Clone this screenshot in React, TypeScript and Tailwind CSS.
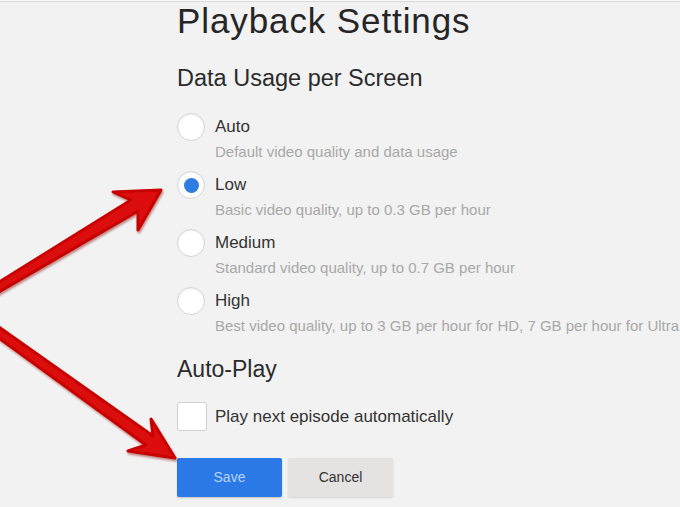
import React from "react";

type Option = { label: string; desc: string; checked?: boolean };

const options: Option[] = [
  { label: "Auto", desc: "Default video quality and data usage" },
  { label: "Low", desc: "Basic video quality, up to 0.3 GB per hour", checked: true },
  { label: "Medium", desc: "Standard video quality, up to 0.7 GB per hour" },
  { label: "High", desc: "Best video quality, up to 3 GB per hour for HD, 7 GB per hour for Ultra HD" },
];

function Radio({ checked }: { checked?: boolean }) {
  return (
    <span className="flex h-[28px] w-[28px] shrink-0 items-center justify-center rounded-full border border-[#d4d4d4] bg-white shadow-[inset_0_1px_2px_rgba(0,0,0,0.06)]">
      {checked && <span className="h-[15px] w-[15px] rounded-full bg-[#2f7de3]" />}
    </span>
  );
}

function Arrows() {
  return (
    <svg className="pointer-events-none absolute left-0 top-0" width="680" height="507" viewBox="0 0 680 507">
      <defs>
        <filter id="arrowShade" x="-20%" y="-20%" width="140%" height="140%">
          <feDropShadow dx="1" dy="2" stdDeviation="1.2" floodColor="#7a0000" floodOpacity="0.45" />
        </filter>
      </defs>
      <g fill="#dc0a0a" stroke="#c80606" strokeWidth="3" strokeLinejoin="round" filter="url(#arrowShade)">
        {/* arrow pointing at the Low option */}
        <polygon points="161,190 113,192 131,200 -12,289 -8,296 138,211 138,230" />
        {/* arrow pointing at the Save button */}
        <polygon points="175,458 151,419 153,436 -7,323 -12,330 146,445 128,451" />
      </g>
    </svg>
  );
}

export default function App() {
  return (
    <div className="relative h-[507px] w-[680px] overflow-hidden bg-[#f2f2f2] font-['Liberation_Sans',Arial,sans-serif]">
      <div className="h-[1px] bg-[#fafafa]" />
      <div className="border-t border-[#d9d9d9] pl-[177px]">
        <h1 className="text-[35px] leading-[38px] tracking-[0.9px] text-[#262626]">Playback Settings</h1>
        <h2 className="mt-[24px] text-[23.5px] leading-[28px] text-[#2b2b2b]">Data Usage per Screen</h2>

        <div className="mt-[21px] flex flex-col gap-[11px]">
          {options.map((o) => (
            <div key={o.label} className="flex flex-col">
              <div className="flex h-[28px] items-center gap-[10px]">
                <Radio checked={o.checked} />
                <span className="text-[17px] leading-[18px] text-[#333]">{o.label}</span>
              </div>
              <div className="mt-[3px] whitespace-nowrap pl-[38px] text-[15px] leading-[16px] text-[#a8a8a8]">{o.desc}</div>
            </div>
          ))}
        </div>

        <h2 className="mt-[21px] text-[23px] leading-[28px] text-[#2b2b2b]">Auto-Play</h2>

        <div className="mt-[19px] flex items-center gap-[8px]">
          <span className="h-[29px] w-[30px] shrink-0 rounded-[2px] border border-[#d0d0d0] bg-white" />
          <span className="text-[17px] leading-[20px] text-[#333]">Play next episode automatically</span>
        </div>

        <div className="mt-[27px] flex gap-[6px]">
          <button className="h-[39px] w-[105px] rounded-[2px] bg-[#2b79e6] text-[14px] text-[#b8d3f7] shadow-[0_1px_2px_rgba(0,0,0,0.2)]">
            Save
          </button>
          <button className="h-[39px] w-[105px] rounded-[2px] bg-[#e5e2e2] text-[14px] text-[#333] shadow-[0_1px_2px_rgba(0,0,0,0.12)]">
            Cancel
          </button>
        </div>
      </div>
      <Arrows />
    </div>
  );
}
